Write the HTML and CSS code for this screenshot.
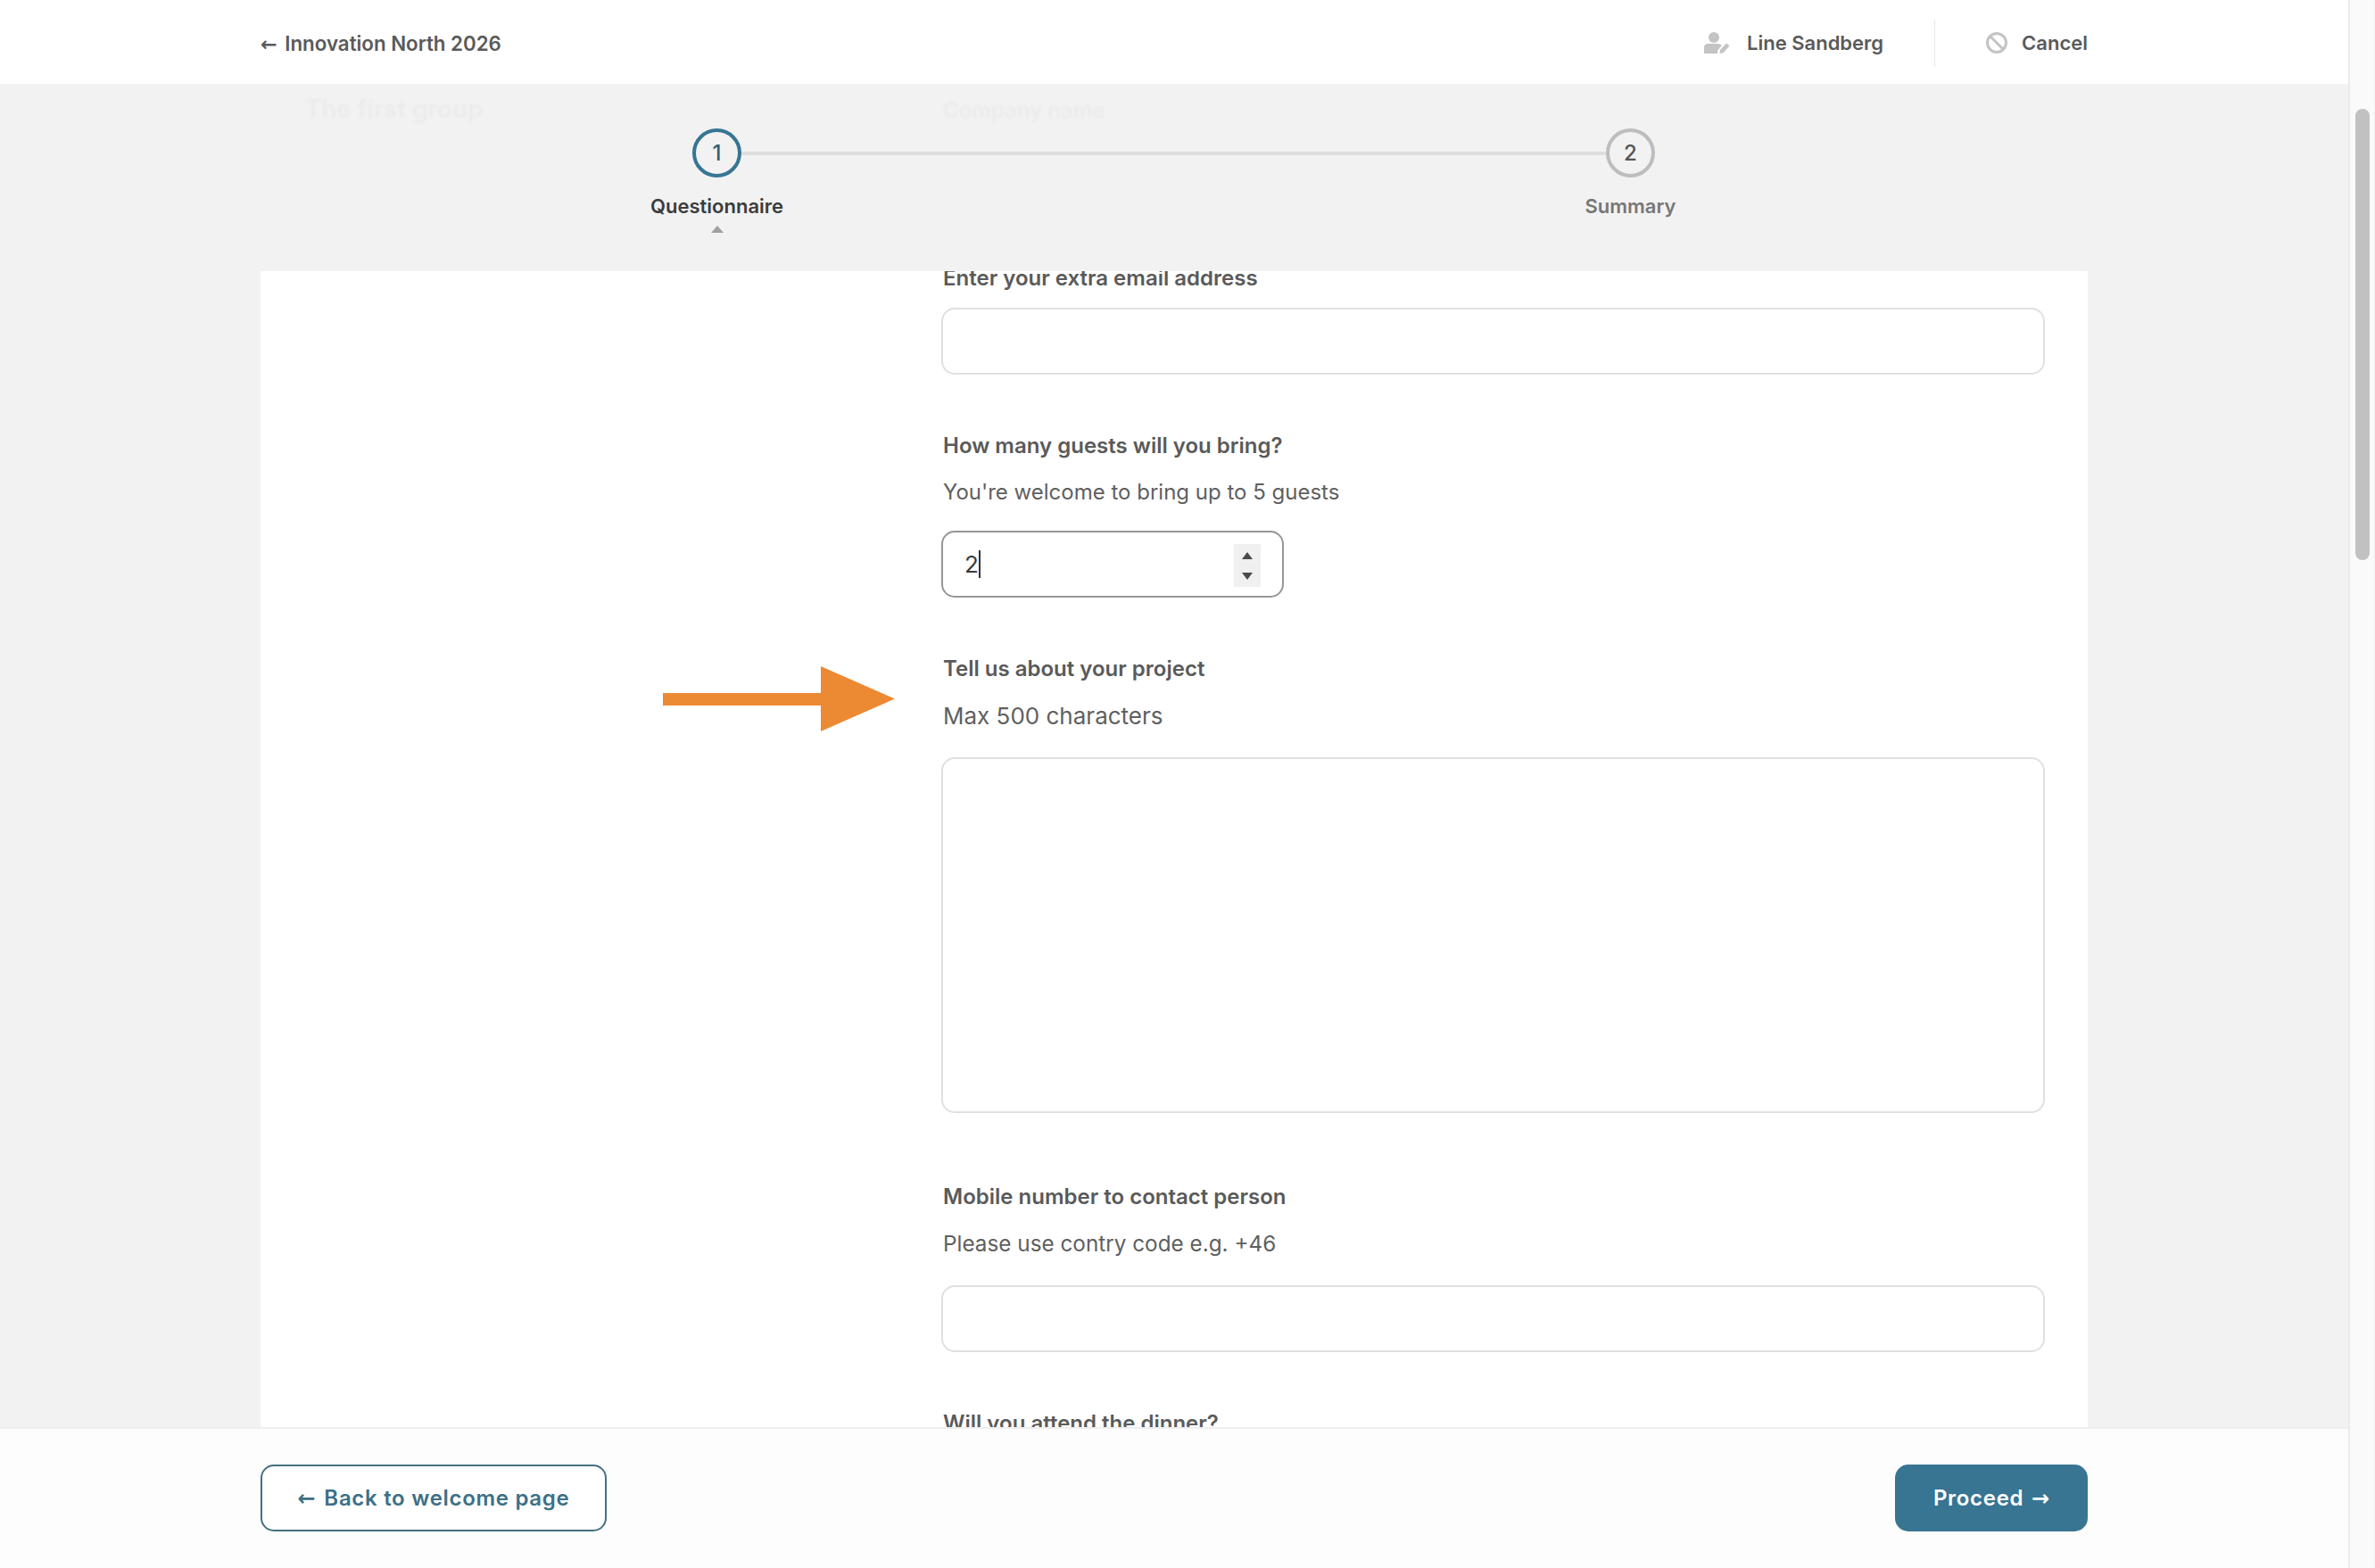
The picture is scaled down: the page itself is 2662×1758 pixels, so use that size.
FILE: index.html
```html
<!DOCTYPE html>
<html lang="en">
<head>
<meta charset="utf-8">
<title>Innovation North 2026</title>
<link rel="stylesheet" href="styles.css">
</head>
<body>
<div class="app">
  <div class="main">
    <header class="topbar">
      <a class="event-link"><span class="arrow arrow-back">←</span> Innovation North 2026</a>
      <div class="top-actions">
        <div class="user">
          <svg class="icon-user" viewBox="0 0 30 24" aria-hidden="true">
            <circle cx="11" cy="6" r="6" fill="#c4c4c4"/>
            <path d="M0 24V17C0 14.500 2 13 4.500 13H15.500C17.500 13 19 13.800 19.800 15L15 21V24Z" fill="#c4c4c4"/>
            <path d="M17.500 24L18 20L25 12.500L28.500 15.500L21.500 23.200Z" fill="#c4c4c4"/>
          </svg>
          <span>Line Sandberg</span>
        </div>
        <div class="cancel">
          <svg class="icon-cancel" viewBox="0 0 24 24" aria-hidden="true">
            <circle cx="12" cy="12" r="10.500" fill="none" stroke="#c4c4c4" stroke-width="3"/>
            <path d="M5 5L19 19" stroke="#c4c4c4" stroke-width="3"/>
          </svg>
          <span>Cancel</span>
        </div>
      </div>
    </header>

    <section class="stepper-band">
      <span class="ghost ghost-group">The first group</span>
      <span class="ghost ghost-company">Company name</span>
      <div class="stepper">
        <div class="step step-active">
          <div class="step-circle">1</div>
          <div class="step-label">Questionnaire</div>
          <div class="step-caret"></div>
        </div>
        <div class="step-line"></div>
        <div class="step">
          <div class="step-circle">2</div>
          <div class="step-label">Summary</div>
        </div>
      </div>
    </section>

    <main class="content">
      <svg class="callout" viewBox="0 0 260 73" aria-hidden="true">
        <path d="M0 30H177V0L260 36.500L177 73V44H0Z" fill="#ec8a33"/>
      </svg>
      <div class="card">
        <form class="form">
          <div class="field field-first">
            <label class="field-label">Enter your extra email address</label>
            <input class="text-input input-near" type="text">
          </div>
          <div class="field">
            <label class="field-label">How many guests will you bring?</label>
            <p class="hint hint-small">You're welcome to bring up to 5 guests</p>
            <div class="number-input">
              <span class="number-value">2</span><span class="caret"></span>
              <span class="spinner"><span class="spin-up"></span><span class="spin-down"></span></span>
            </div>
          </div>
          <div class="field">
            <label class="field-label">Tell us about your project</label>
            <p class="hint hint-large">Max 500 characters</p>
            <textarea class="text-area"></textarea>
          </div>
          <div class="field field-wide-gap">
            <label class="field-label">Mobile number to contact person</label>
            <p class="hint hint-small">Please use contry code e.g. +46</p>
            <input class="text-input" type="text">
          </div>
          <div class="field">
            <label class="field-label">Will you attend the dinner?</label>
          </div>
        </form>
      </div>
    </main>

    <footer class="footer">
      <button class="btn btn-outline" type="button"><span class="arrow arrow-back">←</span> Back to welcome page</button>
      <button class="btn btn-solid" type="button">Proceed <span class="arrow arrow-next">→</span></button>
    </footer>
  </div>
  <div class="scrollbar"><div class="thumb"></div></div>
</div>
</body>
</html>
```

FILE: styles.css
```css
* { box-sizing: border-box; }
html, body { margin: 0; height: 100%; overflow: hidden; }
body { font-family: Inter, "Liberation Sans", sans-serif; color: #5a5a5a; background: #f2f2f2; }

.app { display: flex; width: 2662px; height: 1758px; }
.main { position: relative; flex: 1; min-width: 0; display: flex; flex-direction: column; }

.topbar {
  height: 94px; flex: none; background: #fff; padding: 2px 292px 0;
  display: flex; align-items: center; justify-content: space-between;
  font-size: 22px; font-weight: 600; color: #5a5a5a;
}
.arrow { font-family: "DejaVu Sans", sans-serif; font-weight: 700; letter-spacing: 0; }
.arrow-back { margin-right: 3px; }
.arrow-next { margin-left: 2px; }
.event-link { font-size: 22.300px; white-space: nowrap; }
.top-actions { display: flex; align-items: center; }
.user { display: flex; align-items: center; gap: 18px; padding-right: 57px; }
.icon-user { width: 30px; height: 24px; }
.cancel { display: flex; align-items: center; gap: 16px; height: 53px; padding-left: 57px; border-left: 1px solid #e8e8e8; }
.icon-cancel { width: 24px; height: 24px; }

.stepper-band { position: relative; height: 210px; flex: none; background: #f2f2f2; }
.ghost { position: absolute; font-weight: 600; color: #ebebeb; filter: blur(1px); }
.ghost-group { left: 342px; top: 11px; font-size: 27.800px; }
.ghost-company { left: 1057px; top: 15px; font-size: 24px; }
.stepper { display: flex; align-items: flex-start; width: 1079px; margin-left: 776px; padding-top: 50px; }
.step { position: relative; width: 55px; flex: none; display: flex; flex-direction: column; align-items: center; color: #777; }
.step-circle {
  width: 55px; height: 55px; border-radius: 50%; border: 4px solid #bdbdbd;
  display: flex; align-items: center; justify-content: center;
  font-size: 24px; font-weight: 500; color: #555;
}
.step-label { margin-top: 20px; font-size: 22px; font-weight: 600; line-height: 24px; white-space: nowrap; }
.step-active .step-circle { border-color: #377593; color: #2f5f78; }
.step-active .step-label { color: #3c3c3c; }
.step-caret { margin-top: 10px; border-left: 7px solid transparent; border-right: 7px solid transparent; border-bottom: 8px solid #a0a0a0; }
.step-line { flex: 1; height: 4px; margin-top: 26px; background: #dedede; }

.content { position: relative; flex: 1; min-height: 0; overflow: hidden; }
.callout { position: absolute; left: 743px; top: 443px; width: 260px; height: 73px; }
.card { width: 2048px; height: 100%; margin: 0 auto; background: #fff; padding: 0 48px 0 763px; }
.form { display: flex; flex-direction: column; }
.field { display: flex; flex-direction: column; margin-top: 64px; }
.field-first { margin-top: -8px; }
.field-wide-gap { margin-top: 78px; }
.field-label { height: 30px; line-height: 31px; font-size: 24px; font-weight: 600; color: #5a5a5a; padding-left: 2px; white-space: nowrap; }
.hint { margin: 23px 0 0; height: 30px; line-height: 30px; padding-left: 2px; color: #5f5f5f; }
.hint-small { font-size: 24px; margin-bottom: 28px; }
.hint-large { font-size: 26px; line-height: 32px; margin-bottom: 32px; }
.field-wide-gap .hint-small { font-size: 24.300px; line-height: 31px; margin-bottom: 32px; }

.text-input, .text-area, .number-input {
  display: block; background: #fff; border: 2px solid #e0e0e0; border-radius: 15px; outline: none;
}
.text-input { width: 100%; height: 75px; }
.input-near { margin-top: 19px; }
.text-area { width: 100%; height: 399px; resize: none; }
.number-input {
  position: relative; width: 384px; height: 75px; border-color: #969696;
  display: flex; align-items: center; padding-left: 24px; font-size: 26px; color: #3a3a3a;
}
.caret { width: 2px; height: 31px; background: #333; }
.spinner {
  position: absolute; right: 24px; top: 13px; width: 30px; height: 48px; background: #f0f0f0;
  display: flex; flex-direction: column; align-items: center; justify-content: center; gap: 15px;
}
.spin-up { border-left: 6.500px solid transparent; border-right: 6.500px solid transparent; border-bottom: 8px solid #4a4a4a; }
.spin-down { border-left: 6.500px solid transparent; border-right: 6.500px solid transparent; border-top: 8px solid #4a4a4a; }

.footer {
  flex: none; height: 158px; background: #fdfdfd; border-top: 2px solid #eeeeee; padding: 0 292px 1px;
  display: flex; align-items: center; justify-content: space-between;
}
.btn {
  height: 75px; border-radius: 15px; font-family: inherit; font-size: 24px; font-weight: 600; letter-spacing: 0.700px;
  display: flex; align-items: center; justify-content: center; white-space: pre;
}
.btn-outline { width: 388px; background: #fff; border: 2px solid #457083; color: #3d7086; }
.btn-solid { width: 216px; background: #377593; border: 0; color: #fff; }

.scrollbar { width: 30px; flex: none; background: #fafafa; border-left: 2px solid #ebebeb; border-right: 1px solid #f0f0f0; padding: 122px 5px 0 6px; }
.thumb { width: 16px; height: 506px; border-radius: 8px; background: #c1c1c1; }
```
